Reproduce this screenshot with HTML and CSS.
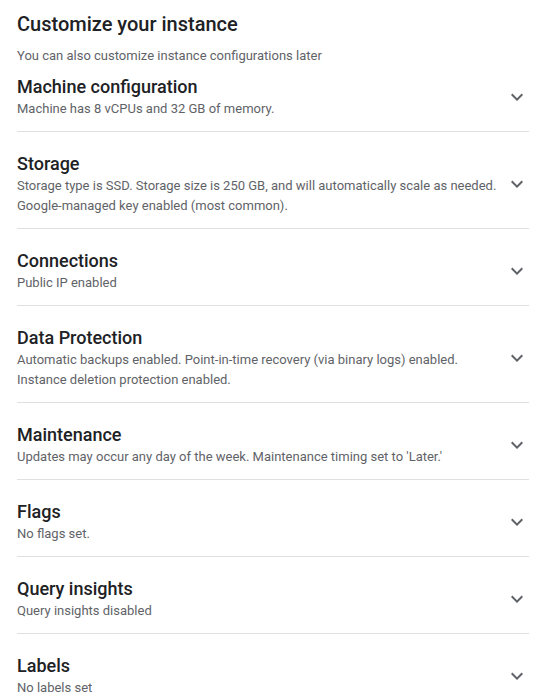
FILE: index.html
```html
<!DOCTYPE html>
<html>
<head>
<meta charset="utf-8">
<link rel="stylesheet" href="styles.css">
</head>
<body>
<div class="page">
  <h1 class="title">Customize your instance</h1>
  <p class="subtitle">You can also customize instance configurations later</p>

  <div class="section first">
    <div class="text">
      <div class="name">Machine configuration</div>
      <div class="desc">Machine has 8 vCPUs and 32 GB of memory.</div>
    </div>
    <svg class="chev" viewBox="0 0 24 24"><path d="M16.59 8.59L12 13.17 7.41 8.59 6 10l6 6 6-6z"/></svg>
  </div>

  <div class="section">
    <div class="text">
      <div class="name">Storage</div>
      <div class="desc">Storage type is SSD. Storage size is 250 GB, and will automatically scale as needed.<br>Google-managed key enabled (most common).</div>
    </div>
    <svg class="chev" viewBox="0 0 24 24"><path d="M16.59 8.59L12 13.17 7.41 8.59 6 10l6 6 6-6z"/></svg>
  </div>

  <div class="section">
    <div class="text">
      <div class="name">Connections</div>
      <div class="desc">Public IP enabled</div>
    </div>
    <svg class="chev" viewBox="0 0 24 24"><path d="M16.59 8.59L12 13.17 7.41 8.59 6 10l6 6 6-6z"/></svg>
  </div>

  <div class="section">
    <div class="text">
      <div class="name">Data Protection</div>
      <div class="desc">Automatic backups enabled. Point-in-time recovery (via binary logs) enabled.<br>Instance deletion protection enabled.</div>
    </div>
    <svg class="chev" viewBox="0 0 24 24"><path d="M16.59 8.59L12 13.17 7.41 8.59 6 10l6 6 6-6z"/></svg>
  </div>

  <div class="section">
    <div class="text">
      <div class="name">Maintenance</div>
      <div class="desc">Updates may occur any day of the week. Maintenance timing set to 'Later.'</div>
    </div>
    <svg class="chev" viewBox="0 0 24 24"><path d="M16.59 8.59L12 13.17 7.41 8.59 6 10l6 6 6-6z"/></svg>
  </div>

  <div class="section">
    <div class="text">
      <div class="name">Flags</div>
      <div class="desc">No flags set.</div>
    </div>
    <svg class="chev" viewBox="0 0 24 24"><path d="M16.59 8.59L12 13.17 7.41 8.59 6 10l6 6 6-6z"/></svg>
  </div>

  <div class="section">
    <div class="text">
      <div class="name">Query insights</div>
      <div class="desc">Query insights disabled</div>
    </div>
    <svg class="chev" viewBox="0 0 24 24"><path d="M16.59 8.59L12 13.17 7.41 8.59 6 10l6 6 6-6z"/></svg>
  </div>

  <div class="section">
    <div class="text">
      <div class="name">Labels</div>
      <div class="desc">No labels set</div>
    </div>
    <svg class="chev" viewBox="0 0 24 24"><path d="M16.59 8.59L12 13.17 7.41 8.59 6 10l6 6 6-6z"/></svg>
  </div>
</div>
</body>
</html>
```
FILE: styles.css
```css
html, body {
  margin: 0;
  padding: 0;
  background: #ffffff;
}
body {
  font-family: Roboto, "Liberation Sans", Arial, sans-serif;
  color: #202124;
}
.page {
  padding: 10px 18px 0 17px;
}
.title {
  margin: 0;
  font-size: 20px;
  font-weight: 500;
  line-height: 28px;
  color: #202124;
}
.subtitle {
  margin: 8px 0 0 0;
  font-size: 13px;
  line-height: 20px;
  color: #5f6368;
}
.section {
  display: flex;
  align-items: center;
  padding: 20px 0 12px 0;
  border-bottom: 1px solid #e0e0e0;
}
.section.first {
  padding-top: 9px;
}
.section:last-child {
  border-bottom: none;
}
.text {
  flex: 1;
  min-width: 0;
}
.name {
  font-size: 18px;
  font-weight: 500;
  line-height: 24px;
  color: #202124;
}
.desc {
  font-size: 13px;
  line-height: 20px;
  color: #5f6368;
}
.chev {
  width: 24px;
  height: 24px;
  fill: #5f6368;
  flex: none;
}
```
